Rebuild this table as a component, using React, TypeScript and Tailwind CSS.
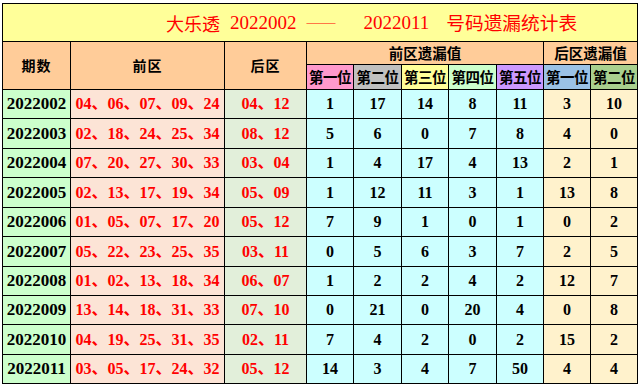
import React from 'react';

const rows = [
    { qi: "2022002", front: "04、06、07、09、24", back: "04、12", miss: [1, 17, 14, 8, 11, 3, 10] },
    { qi: "2022003", front: "02、18、24、25、34", back: "08、12", miss: [5, 6, 0, 7, 8, 4, 0] },
    { qi: "2022004", front: "07、20、27、30、33", back: "03、04", miss: [1, 4, 17, 4, 13, 2, 1] },
    { qi: "2022005", front: "02、13、17、19、34", back: "05、09", miss: [1, 12, 11, 3, 1, 13, 8] },
    { qi: "2022006", front: "01、05、07、17、20", back: "05、12", miss: [7, 9, 1, 0, 1, 0, 2] },
    { qi: "2022007", front: "05、22、23、25、35", back: "03、11", miss: [0, 5, 6, 3, 7, 2, 5] },
    { qi: "2022008", front: "01、02、13、18、34", back: "06、07", miss: [1, 2, 2, 4, 2, 12, 7] },
    { qi: "2022009", front: "13、14、18、31、33", back: "07、10", miss: [0, 21, 0, 20, 4, 0, 8] },
    { qi: "2022010", front: "04、19、25、31、35", back: "02、11", miss: [7, 4, 2, 0, 2, 15, 2] },
    { qi: "2022011", front: "03、05、17、24、32", back: "05、12", miss: [14, 3, 4, 7, 50, 4, 4] },
];

const subHeads = [
    { label: "第一位", bg: "bg-[#ff99cc]" },
    { label: "第二位", bg: "bg-[#c0c0c0]" },
    { label: "第三位", bg: "bg-[#ffff99]" },
    { label: "第四位", bg: "bg-[#ccffcc]" },
    { label: "第五位", bg: "bg-[#cc99ff]" },
    { label: "第一位", bg: "bg-[#9bc2e6]" },
    { label: "第二位", bg: "bg-[#a9d08e]" },
];

const cjk = "font-['Noto_Sans_CJK_SC',sans-serif]";
const num = "font-['Liberation_Serif','Noto_Sans_CJK_SC',serif]";

export default function App() {
    return (
        <div className="w-[640px] h-[385px] bg-white overflow-hidden pt-[3px] pl-[2px]">
            <div className="grid w-fit gap-px bg-black p-px grid-cols-[67px_153px_81px_46px_47px_46px_47px_46px_46px_46px] grid-rows-[37px_22px_24px_28px_29px_28px_29px_28px_29px_28px_28px_29px_28px]">
                {/* title */}
                <div className="col-span-10 bg-[#ffff99] flex items-center pl-[163px] text-[#ff0000] leading-none">
                    <span className={`${cjk} text-[18px]`}>大乐透</span>
                    <span className={`${num} text-[19px] ml-[10px]`}>2022002</span>
                    <span className={`${num} text-[14.5px] ml-[10px]`}>——</span>
                    <span className={`${num} text-[19px] ml-[28px]`}>2022011</span>
                    <span className={`${cjk} text-[18.7px] ml-[17px]`}>号码遗漏统计表</span>
                </div>

                {/* header */}
                <div className={`row-span-2 bg-[#ffcc99] flex items-center justify-center font-bold text-[14px] tracking-[1px] ${cjk}`}>期数</div>
                <div className={`row-span-2 bg-[#ffcc99] flex items-center justify-center font-bold text-[14px] tracking-[1px] ${cjk}`}>前区</div>
                <div className={`row-span-2 bg-[#ffcc99] flex items-center justify-center font-bold text-[14px] tracking-[1px] ${cjk}`}>后区</div>
                <div className={`col-span-5 bg-[#ffcc99] flex items-center justify-center font-bold text-[14.5px] ${cjk}`}>前区遗漏值</div>
                <div className={`col-span-2 bg-[#ffcc99] flex items-center justify-center font-bold text-[14.5px] ${cjk}`}>后区遗漏值</div>
                {subHeads.map((h, i) => (
                    <div key={i} className={`${h.bg} flex items-center justify-center font-bold text-[14.5px] tracking-[-0.5px] whitespace-nowrap ${cjk}`}>{h.label}</div>
                ))}

                {/* data */}
                {rows.map((r) => (
                    <React.Fragment key={r.qi}>
                        <div className={`bg-[#ccffcc] flex items-center justify-center font-bold text-[17px] ${num}`}>{r.qi}</div>
                        <div className={`bg-[#fce4d6] flex items-center justify-center font-bold text-[16px] text-[#ff0000] whitespace-nowrap ${num}`}>{r.front}</div>
                        <div className={`bg-[#e2efda] flex items-center justify-center font-bold text-[16px] text-[#ff0000] whitespace-nowrap ${num}`}>{r.back}</div>
                        {r.miss.map((m, j) => (
                            <div key={j} className={`${j < 5 ? "bg-[#ccffff]" : "bg-[#fff2cc]"} flex items-center justify-center font-bold text-[16px] ${num}`}>{m}</div>
                        ))}
                    </React.Fragment>
                ))}
            </div>
        </div>
    );
}
